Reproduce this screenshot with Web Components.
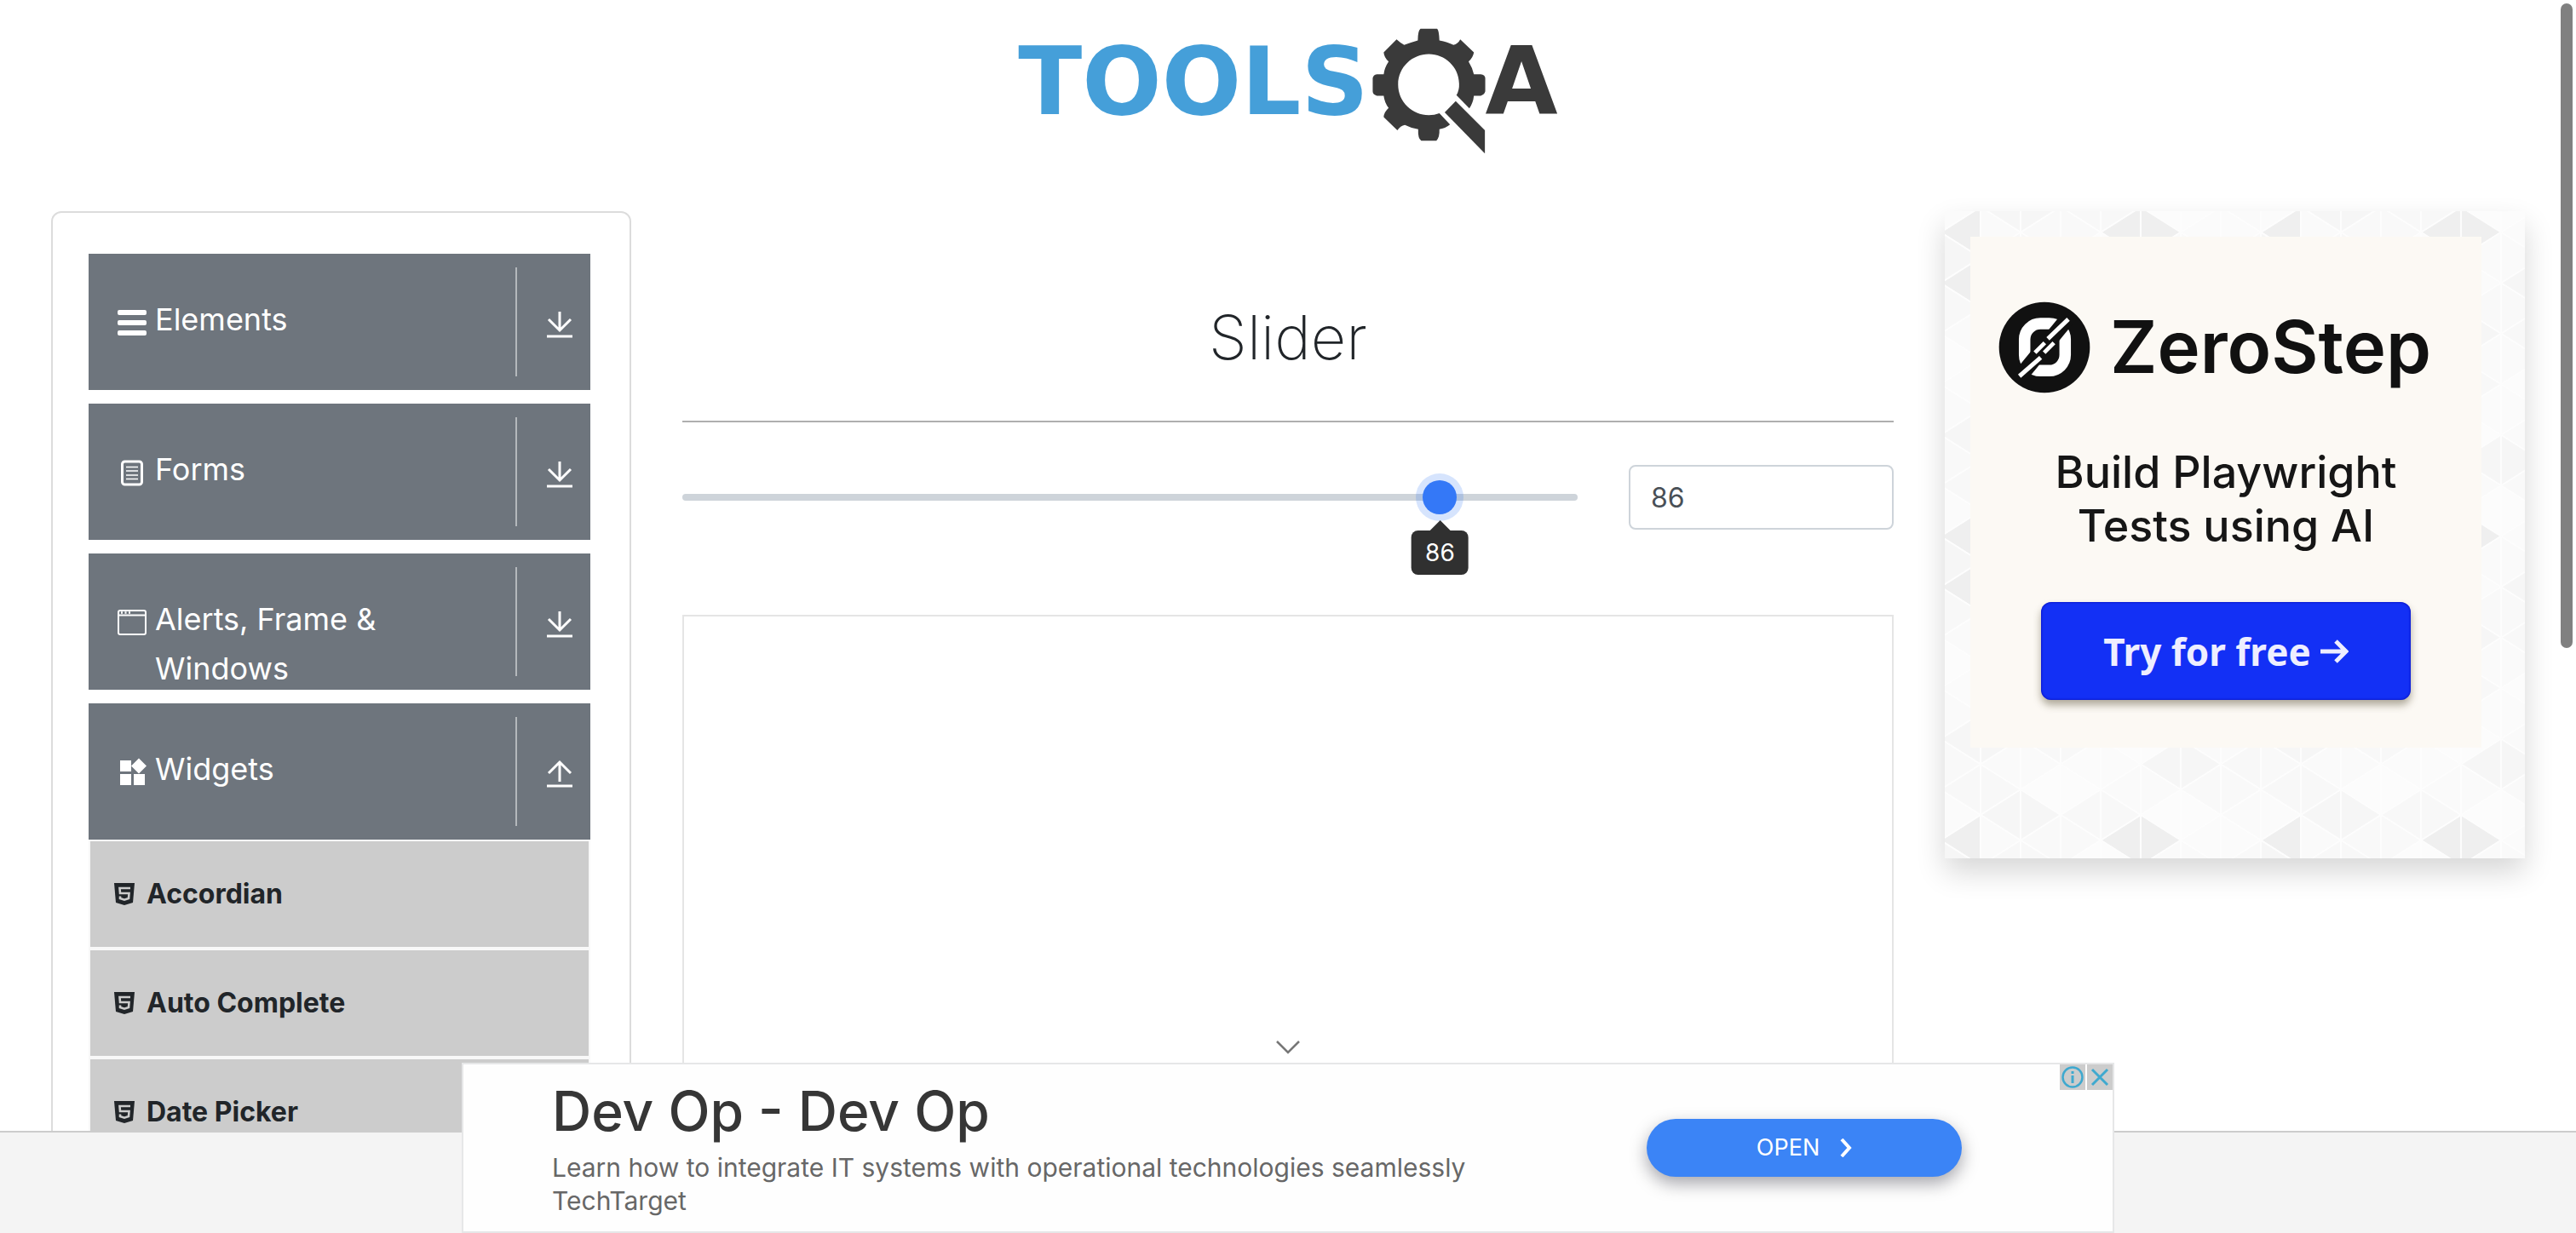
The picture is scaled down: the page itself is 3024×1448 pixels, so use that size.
<!DOCTYPE html>
<html lang="en">
<head>
<meta charset="utf-8">
<title>ToolsQA - Slider</title>
<style>
  html, body { margin: 0; }
  body { font-family: Inter, "Liberation Sans", sans-serif; font-size: 32px; line-height: 48px; color: #212529; background: #fff; }
</style>
</head>
<body>
<page-shell>
  <tools-logo slot="header"></tools-logo>
  <nav-panel slot="left">
    <nav-group icon="menu" label="Elements"></nav-group>
    <nav-group icon="form" label="Forms"></nav-group>
    <nav-group icon="window" label="Alerts, Frame &amp; Windows"></nav-group>
    <nav-group icon="widgets" label="Widgets" open>
      <nav-item>Accordian</nav-item>
      <nav-item>Auto Complete</nav-item>
      <nav-item>Date Picker</nav-item>
    </nav-group>
  </nav-panel>
  <slider-demo slot="main" value="86"></slider-demo>
  <zero-step-ad slot="right"></zero-step-ad>
  <bottom-bar slot="footer"><banner-ad></banner-ad></bottom-bar>
</page-shell>

<script>
const define = (name, html, setup) => {
  const tpl = document.createElement('template');
  tpl.innerHTML = html;
  customElements.define(name, class extends HTMLElement {
    constructor() {
      super();
      this.attachShadow({ mode: 'open' }).append(tpl.content.cloneNode(true));
    }
    connectedCallback() { if (setup) setup(this, this.shadowRoot); }
  });
};

define('page-shell', `
<style>
  :host { display: block; height: 100vh; overflow: hidden; position: relative; }
  header { display: flex; justify-content: center; padding: 32px 0 67px; }
  .row { display: flex; align-items: flex-start; padding: 0 30px; }
  .side { flex: 0 0 25%; box-sizing: border-box; padding: 0 30px; }
  main { flex: 0 0 50%; box-sizing: border-box; padding: 0 30px; }
  .thumb { position: fixed; top: 4px; right: 4px; width: 14px; height: 757px; border-radius: 7px; background: #808080; }
</style>
<header><slot name="header"></slot></header>
<div class="row">
  <aside class="side"><slot name="left"></slot></aside>
  <main><slot name="main"></slot></main>
  <aside class="side"><slot name="right"></slot></aside>
</div>
<slot name="footer"></slot>
<div class="thumb"></div>`);

define('tools-logo', `
<style>
  :host { display: block; }
  a { display: flex; align-items: flex-start; color: #3a3a3a; text-decoration: none; font: bold 110px/128px "DejaVu Sans", sans-serif; }
  span { color: #459fd9; margin-right: 4px; }
  svg { display: block; width: 133px; height: 149px; }
</style>
<a href="#"><span>TOOLS</span><svg viewBox="986 66 299 443" preserveAspectRatio="none" fill="#3a3a3a" aria-hidden="true">
<path fill-rule="evenodd" d="M1113 71H1157Q1162 76 1163 112Q1185 118 1200 128Q1212 124 1218 108L1254 154Q1252 172 1240 186Q1250 208 1254 230H1272Q1284 232 1284 244V290Q1282 302 1272 305H1254Q1252 330 1242 349L1208 303Q1216 285 1215 262C1214 205 1178 160 1135 160C1092 160 1054 205 1054 266C1054 328 1092 373 1135 373Q1150 373 1163 366L1191 406Q1178 420 1163 422Q1164 450 1155 462H1115Q1106 455 1107 422Q1088 418 1072 407Q1060 410 1052 426L1016 380Q1016 364 1029 348Q1018 328 1016 305H998Q987 302 987 290V244Q988 232 998 230H1016Q1018 208 1029 186Q1017 172 1016 154L1050 108Q1060 120 1070 128Q1085 120 1106 112Q1106 78 1113 71Z"/>
<path d="M1206 324L1283 426V507L1177 363Z"/></svg>A</a>`);

define('nav-panel', `
<style>
  :host { display: block; border: 2px solid #dcdcdc; border-radius: 12px; padding: 48px 46px 48px 42px; }
  nav { display: flex; flex-direction: column; gap: 16px; }
</style>
<nav><slot></slot></nav>`);

const ICONS = {
  menu: '<path d="M2 1h30a2 2 0 0 1 2 2v2a2 2 0 0 1-2 2H2a2 2 0 0 1-2-2V3a2 2 0 0 1 2-2zM2 13h30a2 2 0 0 1 2 2v2a2 2 0 0 1-2 2H2a2 2 0 0 1-2-2v-2a2 2 0 0 1 2-2zM2 25h30a2 2 0 0 1 2 2v2a2 2 0 0 1-2 2H2a2 2 0 0 1-2-2v-2a2 2 0 0 1 2-2z"/>',
  form: '<g fill="none" stroke="#fff"><rect x="5.5" y="3" width="23" height="27" rx="3" stroke-width="3"/><path stroke-width="1.6" d="M10 9.5h14M10 14h14M10 19h14M10 23.500h14"/></g>',
  window: '<g fill="none" stroke="#fff" stroke-width="2"><rect x="1" y="2" width="32" height="28" rx="2"/><path d="M1 7.500h32"/><path stroke-width="2.500" d="M4 4.500h2M8.500 4.500h2M13 4.500h2"/></g>',
  widgets: '<path d="M3 2h13v13H3zM3 18h13v13H3zM19 18h13v13H19zM25 -0.500l9 9-9 9-9-9z"/>'
};

define('nav-group', `
<style>
  :host { display: block; }
  button { display: flex; width: 100%; height: 160px; box-sizing: border-box; border: 0; margin: 0; padding: 16px 20px 16px 34px; background: #6e757d; color: #fff; font: inherit; font-size: 36px; line-height: 58px; text-align: left; overflow: hidden; }
  svg { display: block; flex: none; fill: #fff; overflow: visible; }
  #icon { width: 34px; height: 34px; margin: 49px 10px 0 0; }
  #label { flex: 1; padding: 32px 60px 0 0; }
  .arrow { box-sizing: border-box; flex: none; border-left: 2px solid #b4b8bc; padding: 51px 0 0 34px; height: 128px; }
  .arrow svg { width: 32px; height: 34px; fill: none; stroke: #fff; stroke-width: 3; }
  .list { display: none; background: #f8f8f8; }
  :host([open]) .list { display: flex; flex-direction: column; gap: 4px; padding: 2px; }
</style>
<button type="button"><svg id="icon" viewBox="0 0 34 34" aria-hidden="true"></svg><span id="label"></span><span class="arrow"><svg viewBox="0 0 32 34" aria-hidden="true"><path id="arr"/></svg></span></button>
<div class="list"><slot></slot></div>`, (el, root) => {
  root.querySelector('#icon').innerHTML = ICONS[el.getAttribute('icon')];
  root.querySelector('#label').textContent = el.getAttribute('label');
  const open = el.hasAttribute('open');
  root.querySelector('button').setAttribute('aria-expanded', open);
  root.querySelector('#arr').setAttribute('d', open
    ? 'M16 25V3M3 15L16 2L29 15M1 30H31' : 'M16 1V23M3 10L16 23L29 10M1 30H31');
});

define('nav-item', `
<style>
  :host { display: block; }
  a { display: flex; align-items: center; gap: 14px; height: 124px; padding-left: 28px; background: #ccc; color: #212529; font-size: 32px; font-weight: 700; text-decoration: none; }
  svg { width: 24px; height: 26px; }
</style>
<a href="#"><svg viewBox="0 0 24 26" aria-hidden="true"><path fill="#212529" d="M0 0H24L22 23L12 26L2 23Z"/><path fill="none" stroke="#ccc" stroke-width="2.600" d="M19 6H6.500L7 12H17.500L17 18L12 19.700L7 18V15.500"/></svg><span><slot></slot></span></a>`);

define('slider-demo', `
<style>
  :host { display: block; padding-top: 100px; }
  h1 { margin: 0; font-size: 72px; line-height: 96px; font-weight: 200; text-align: center; }
  hr { border: 0; border-top: 2px solid #afafaf; margin: 50px 0; }
  .row { display: flex; gap: 60px; align-items: center; }
  .range { position: relative; flex: 1051 1 0; display: flex; }
  #r { -webkit-appearance: none; appearance: none; width: 100%; height: 40px; margin: 0; background: none; outline: none; }
  #r::-webkit-slider-runnable-track { height: 8px; border-radius: 4px; background: #ced4da; }
  #r::-webkit-slider-thumb { -webkit-appearance: none; width: 40px; height: 40px; margin-top: -16px; border: 0; border-radius: 50%; background: #3478f7; box-shadow: 0 0 0 8px rgba(52,120,247,.2); }
  output { position: absolute; top: 59px; left: calc(20px + (100% - 40px) * var(--v)); transform: translateX(-50%); padding: 0 16px; border-radius: 8px; background: #303030; color: #fff; font-size: 28px; line-height: 52px; }
  output::before { content: ""; position: absolute; left: calc(50% - 12px); top: -12px; border: 12px solid transparent; border-top: 0; border-bottom-color: #303030; }
  .num { flex: 311 1 0; min-width: 0; }
  #n { display: block; width: 100%; height: 76px; box-sizing: border-box; border: 2px solid #ced4da; border-radius: 8px; padding: 0 24px; font: inherit; color: #495057; background: #fff; }
  .ad { height: 760px; margin-top: 100px; border: 2px solid #e5e5e5; }
</style>
<h1>Slider</h1>
<hr>
<div class="row">
  <div class="range"><input id="r" type="range" min="0" max="100" aria-label="Slider"><output for="r"></output></div>
  <div class="num"><input id="n" type="text" aria-label="Slider value"></div>
</div>
<div class="ad"></div>`, (el, root) => {
  const r = root.querySelector('#r'), n = root.querySelector('#n'), o = root.querySelector('output');
  const show = v => { r.value = v; n.value = v; o.textContent = v; o.style.setProperty('--v', v / 100); };
  r.addEventListener('input', () => show(r.value));
  show(el.getAttribute('value'));
});

define('zero-step-ad', `
<style>
  :host { display: block; position: relative; height: 760px; background: #fafafa; box-shadow: 0 16px 32px rgba(0,0,0,.16); }
  .bg { position: absolute; inset: 0; width: 100%; height: 100%; }
  .card { position: relative; box-sizing: border-box; display: flex; flex-direction: column; align-items: center; width: 600px; height: 600px; background: #fcf9f4; color: #161616; }
  .wrap { padding: 30px; }
  .brand { display: flex; align-self: flex-start; align-items: center; gap: 23px; margin: 72px 0 0 33px; font-size: 85px; line-height: 116px; font-weight: 600; color: #111; }
  .brand svg { width: 108px; height: 108px; }
  p { margin: 57px 0 0; font-size: 52px; line-height: 63px; font-weight: 500; text-align: center; }
  a { display: flex; align-items: center; justify-content: center; gap: 10px; width: 434px; height: 115px; margin-top: 58px; border-radius: 12px; background: #1330f5; box-shadow: 0 6px 10px rgba(60,50,20,.4), inset 0 0 3px #00a; color: #eef; font: 700 44px/60px "Noto Sans", sans-serif; text-decoration: none; }
  a svg { width: 34px; height: 30px; }
</style>
<svg class="bg" aria-hidden="true"><defs><pattern id="tri" x="-5" y="-5" width="376" height="357" patternUnits="userSpaceOnUse"></pattern></defs><rect width="100%" height="100%" fill="url(#tri)"/></svg>
<div class="wrap"><div class="card">
  <div class="brand"><svg viewBox="50 30 318 320" aria-hidden="true">
    <circle cx="209" cy="190" r="158" fill="#111"/>
    <rect x="140" y="107" width="141" height="164" rx="55" fill="none" stroke="#fff" stroke-width="40"/>
    <path d="M112 306L302 74" stroke="#111" stroke-width="52"/>
    <path d="M122 290L196 225M221 160L292 92" stroke="#fff" stroke-width="15"/>
    <path d="M176 208L210 174M208 208L242 174" stroke="#fff" stroke-width="14"/></svg><span>ZeroStep</span></div>
  <p>Build Playwright<br>Tests using AI</p>
  <a href="#">Try for free<svg viewBox="0 0 34 30" fill="none" stroke="#eef" stroke-width="5" aria-hidden="true"><path d="M1 15H30M19 3L31 15L19 27"/></svg></a>
</div></div>`, (el, root) => {
  const W = 47, H = 59.5, dark = { '0,0,0': 1, '4,0,0': 1, '5,0,1': 1, '0,1,0': 1 };
  let out = '';
  for (let c = 0; c < 8; c++) {
    for (let k = -1; k < 7; k++) {
      for (let t = 0; t < 2; t++) {
        const x = c * W, even = c % 2 === 0;
        const left = t === 0;
        // left: apex on the column's left edge; otherwise on its right edge
        const off = (left === even) ? 0 : -H / 2;
        const y = k * H + off, m = y + H / 2;
        const pts = left ? `${x},${m} ${x + W},${y} ${x + W},${y + H}` : `${x + W},${m} ${x},${y} ${x},${y + H}`;
        const row = (k + 6) % 6;
        const g = dark[`${c},${row},${t}`] ? 239 : [250, 248, 251, 249, 252, 246, 250][(c * 5 + row * 3 + t * 2) % 7];
        out += `<polygon points="${pts}" fill="rgb(${g},${g},${g})" stroke="#fdfdfd" stroke-width="2"/>`;
      }
    }
  }
  root.querySelector('pattern').innerHTML = out;
});

define('bottom-bar', `
<style>
  :host { display: flex; justify-content: center; align-items: flex-end; position: fixed; left: 0; right: 0; bottom: 0; height: 118px; border-top: 2px solid #ccc; background: #f4f4f4; }
</style>
<slot></slot>`);

define('banner-ad', `
<style>
  :host { display: block; flex: none; width: 1940px; color: #363636; }
  .fold { display: flex; margin: 0 auto 10px; padding: 0; border: 0; background: none; width: 28px; height: 16px; }
  .fold svg { width: 28px; height: 16px; }
  .box { position: relative; box-sizing: border-box; display: flex; height: 200px; border: 2px solid #e6e7e8; background: #fefefe; padding: 0 177px 0 104px; }
  .text { flex: 1; }
  h2 { margin: 16px 0 0; font-size: 64px; line-height: 78px; font-weight: 500; }
  p { margin: 8px 0 0; font-size: 30px; line-height: 39px; color: #676767; }
  .cta { align-self: center; display: flex; align-items: center; justify-content: center; gap: 24px; width: 370px; height: 68px; border: 0; border-radius: 34px; background: #3b84f6; color: #fff; font: 27px/34px Inter, sans-serif; box-shadow: 0 8px 20px rgba(0,0,20,.35); }
  .cta svg { width: 14px; height: 22px; }
  .tags { position: absolute; top: 0; right: 0; display: flex; gap: 2px; }
  .tags button { width: 30px; height: 30px; border: 0; padding: 0; background: #ccc; }
  .tags svg { display: block; width: 30px; height: 30px; fill: none; stroke: #3fa9cf; }
</style>
<button class="fold" type="button" aria-label="Collapse"><svg viewBox="0 0 28 16" fill="none" stroke="#777" stroke-width="2.500" aria-hidden="true"><path d="M1 1L14 14L27 1"/></svg></button>
<div class="box">
  <div class="text"><h2>Dev Op - Dev Op</h2><p>Learn how to integrate IT systems with operational technologies seamlessly<br>TechTarget</p></div>
  <button class="cta" type="button">OPEN<svg viewBox="0 0 14 22" fill="none" stroke="#fff" stroke-width="4" aria-hidden="true"><path d="M2 1L11 11L2 21"/></svg></button>
  <div class="tags"><button type="button" aria-label="Ad information"><svg viewBox="0 0 30 30" aria-hidden="true"><circle cx="15" cy="15" r="11.500" stroke-width="2.500"/><path stroke-width="3" d="M15 8v3M15 13v9"/></svg></button><button type="button" aria-label="Close ad"><svg viewBox="0 0 30 30" aria-hidden="true"><path stroke-width="3" d="M6 6L24 24M24 6L6 24"/></svg></button></div>
</div>`);
</script>
</body>
</html>
